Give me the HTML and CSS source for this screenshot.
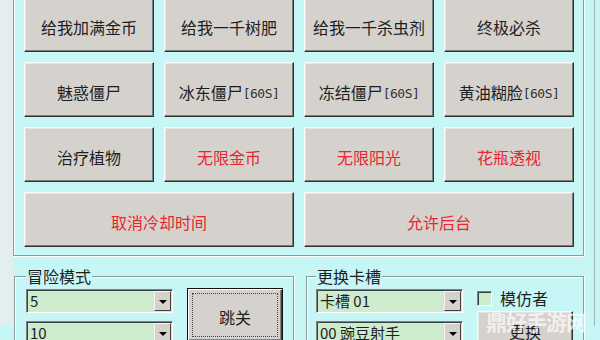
FILE: index.html
```html
<!DOCTYPE html>
<html lang="zh-CN">
  <head>
    <meta charset="utf-8">
    <link rel="stylesheet" href="styles.css">
  </head>
  <body>
    <div class="window">
      <div class="frame">
        <div class="grid">
          <button class="btn">给我加满金币</button>
          <button class="btn">给我一千树肥</button>
          <button class="btn">给我一千杀虫剂</button>
          <button class="btn">终极必杀</button>
          <button class="btn">魅惑僵尸</button>
          <button class="btn"><span>冰东僵尸<span class="tag">[60S]</span></span></button>
          <button class="btn"><span>冻结僵尸<span class="tag">[60S]</span></span></button>
          <button class="btn"><span>黄油糊脸<span class="tag">[60S]</span></span></button>
          <button class="btn">治疗植物</button>
          <button class="btn red">无限金币</button>
          <button class="btn red">无限阳光</button>
          <button class="btn red">花瓶透视</button>
          <button class="btn red wide">取消冷却时间</button>
          <button class="btn red wide">允许后台</button>
        </div>
      </div>
      <div class="bottom">
        <fieldset class="group">
          <legend>冒险模式</legend>
          <div class="group-body">
            <div class="combos">
              <div class="combo"><span class="combo-text">5</span><span class="combo-arrow"></span></div>
              <div class="combo"><span class="combo-text">10</span><span class="combo-arrow"></span></div>
            </div>
            <button class="btn default jump">跳关</button>
          </div>
        </fieldset>
        <fieldset class="group group-right">
          <legend>更换卡槽</legend>
          <div class="group-body">
            <div class="combos">
              <div class="combo"><span class="combo-text">卡槽 01</span><span class="combo-arrow"></span></div>
              <div class="combo"><span class="combo-text">00 豌豆射手</span><span class="combo-arrow"></span></div>
            </div>
            <div class="side">
              <label class="check"><span class="check-box"></span>模仿者</label>
              <button class="btn swap">更换</button>
            </div>
          </div>
        </fieldset>
      </div>
    </div>
    <div class="watermark">鼎好手游网</div>
  </body>
</html>
```

FILE: styles.css
```css
* {margin: 0; padding: 0; box-sizing: border-box;}

body {
	width: 600px;
	height: 340px;
	overflow: hidden;
	position: relative;
	background: #c6f6f6;
	font: 16px "Noto Sans CJK SC", "Liberation Sans", sans-serif;
	color: #1e1e1e;
}

.window {
	width: 595px;
	height: 340px;
	border-left: 13px solid #e3eeee;
	border-right: 1px solid #9fb3b3;
}

/* upper group, its top edge is above the picture */
.frame {
	width: 571px;
	margin-top: -14px;
	padding: 10px 7px 8px 10px;
	border: 1px solid #8c9c9c;
	box-shadow: inset 1px 1px #fff, 1px 1px #fff;
}
.grid {
	display: grid;
	grid-template-columns: repeat(4, 130px);
	grid-auto-rows: 55px;
	gap: 10px;
}

.btn {
	font: 16px "Noto Sans CJK SC", "Liberation Sans", sans-serif;
	color: #1e1e1e;
	background: #d5d2cd;
	border: 1px solid;
	border-color: #fafafa #303030 #303030 #fafafa;
	box-shadow: inset -1px -1px #7c7c7c, inset 1px 1px #e6e4e0;
	padding-top: 4px;
	display: flex;
	align-items: center;
	justify-content: center;
}
.btn.red {color: #e8262e;}
.btn.wide {grid-column: span 2;}
.tag {
	font: 13px "DejaVu Sans Mono", monospace;
	letter-spacing: -0.5px;
	color: #333;
	vertical-align: 1px;
}

.bottom {
	display: flex;
	gap: 12px;
	margin-top: 11px;
	margin-left: 1px;
}
.group {
	width: 280px;
	height: 100px;
	padding: 4px 10px 0 11px;
	border: 1px solid #8c9c9c;
	box-shadow: inset 1px 1px #fff, 1px 1px #fff;
}
.group-right {width: 278px; padding-left: 9px;}
.group legend {
	padding: 0 1px;
	line-height: 18px;
	background: #c6f6f6;
}
.group-body {display: flex; gap: 14px;}

.combos {width: 147px;}
.combo {
	height: 24px;
	display: flex;
	background: #cdebcd;
	border: 1px solid;
	border-color: #808080 #fff #fff #808080;
	box-shadow: inset 1px 1px #404040;
	font-size: 15px;
	line-height: 22px;
}
.combo + .combo {margin-top: 8px;}
.combo-text {flex: 1; padding-left: 3px;}
.combo-arrow {
	width: 17px;
	margin: 1px 1px 1px 0;
	background: #d5d2cd;
	border: 1px solid;
	border-color: #f4f4f4 #404040 #404040 #f4f4f4;
	position: relative;
}
.combo-arrow:after {
	content: "";
	position: absolute;
	left: 4px;
	top: 8px;
	border: 4px solid transparent;
	border-top: 4px solid #000;
	border-bottom: 0;
}

.jump {
	width: 96px;
	height: 54px;
	margin-top: -1px;
	border: 1px solid #101010;
	box-shadow: inset 1px 1px #fff, inset -1px -1px #404040, inset -2px -2px #808080;
	position: relative;
}
.jump:after {
	content: "";
	position: absolute;
	top: 4px; left: 4px; right: 4px; bottom: 4px;
	border: 1px dotted #444;
}

.side {width: 96px;}
.check {
	display: flex;
	align-items: center;
	gap: 8px;
	height: 16px;
	margin-top: 1px;
	line-height: 16px;
}
.check-box {
	width: 15px;
	height: 15px;
	background: #cdebcd;
	border: 1px solid;
	border-color: #808080 #fff #fff #808080;
	box-shadow: inset 1px 1px #404040;
}
.swap {width: 96px; height: 36px; margin-top: 5px;}

.watermark {
	position: absolute;
	left: 486px;
	top: 306px;
	font: bold 21px "Noto Sans CJK SC", sans-serif;
	color: rgba(255, 255, 255, 0.7);
	letter-spacing: -1px;
}
```
